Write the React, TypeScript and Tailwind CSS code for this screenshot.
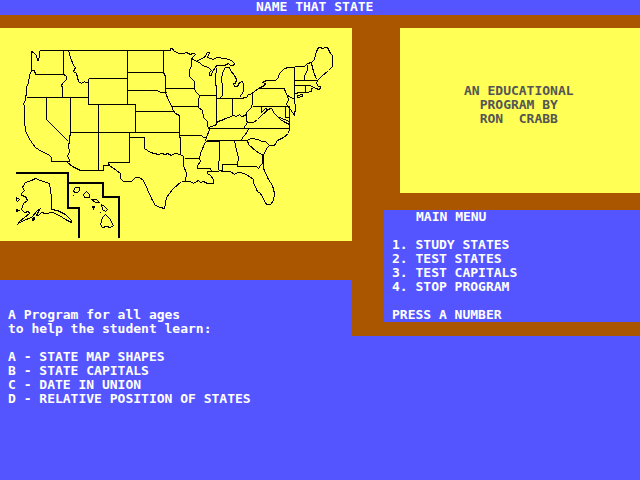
const MAINLAND = [
  // West coast and Pacific states
  'M39 50H170M31 70V51L33 52L36 55L37 60H38L39 56V50M31 70H34L35 74H64M63 50V74L66 76V79L62 83L61 85L62 87V97',
  'M31 70L29 75L28 82L26 87V94L25 96V100L23 103L24 106V120L25 130L28 137L32 143L35 147L41 151L48 154L51 157V161H69',
  'M26 97H88M68 50L70 57L73 65L75 67L73 71L76 73L78 81L81 83L84 81L85 82H88',
  // Mountain states
  'M88 78H127M88 78V104M127 50V104M88 104H135V132M98 104V170M46 97V119L68 141M70 97V135H69V141L68 145L69 152L67 155L69 160L67 162L72 166L80 170H103V165H109L108 163V162H129V132',
  'M70 132H179M129 137H144V148L150 152L158 154L161 153L165 154L167 153L171 155L174 153L181 154',
  // Plains
  'M163 50V72L165 76V92L168 100L171 105L173 111L175 113L179 115V137H180V154L183 156V165L186 173L185 181',
  'M127 72H163M127 90H157L160 92H166M165 88H194M135 111H174M171 106H198M184 158H199M179 135H201L203 137H206',
  // Upper Midwest
  'M170 50V48H172L173 50L178 53H183L186 52L190 54L192 53H194L195 54L192 57L191 59V66L189 69V76L194 81V88L195 91L199 95L198 100V107L202 110L203 117L207 121V126L209 129L206 137L205 141L200 153L199 158L200 161L197 165V168H210L211 171H207V173L210 175L213 179V183H207L203 181L200 182L198 180L193 183L190 181H181',
  'M191 59H193L196 61L201 58L204 57L207 52H209L207 57L210 58L213 59L216 57L225 58L231 60L234 63L233 65H230L228 63L224 65H216L215 67L212 71L211 75L209 75V72L211 70L208 67L202 65L199 62L196 61',
  'M216 67V70L215 75V82L216 88V121M199 95H216M216 98H240L246 97L248 94H250L258 88',
  'M219 98L222 95V87L221 77L223 70L225 67H229L230 70L234 75L236 79L235 83H233L234 86H237L239 82L242 81L243 84V91L239 97',
  // Ohio valley
  'M232 98V115M208 129L210 126L215 125L217 121L221 120L225 118L228 117L233 115L236 116L239 114L241 116L245 115L246 112L251 107L252 103V93M252 106H289M246 112V120L247 122L253 122L257 119L261 115L269 108',
  'M247 122L243 128M208 128H289M206 140H247M248 129L245 134L242 137L241 140M261 106V112L265 108L267 109L271 108L274 113L278 117L280 119L283 121L289 124M279 117L284 119L289 121',
  // Northeast
  'M258 88H284L285 92L287 95L288 100L286 103L287 106L290 109L294 115L295 107L294 99L287 95M258 88L264 85L265 83L262 82L263 81L267 80H275L278 77L279 73L284 68L288 67H294V98',
  'M294 66H304L307 63L311 62L314 59L316 51L318 47H320L322 48L325 47H327L330 53L332 55V66L328 70L321 76L317 80L316 83L318 86H320V88L318 89L316 88L313 87L311 89',
  'M307 64V70L304 75V80M311 63L313 71L316 79M294 80H316M294 85H310L313 87M295 93L299 92H306L311 91V87M305 85V92M297 95L302 94V96L297 97ZM285 106V117H289M289 106V129',
  // South Atlantic and Gulf coasts
  'M289 129L288 133L283 137L277 140L274 145H269L266 148L263 155V168L268 179L272 185L274 193L273 200L270 204H266L260 193L257 191L253 182V179L246 174L240 172L237 172L234 174L230 171H222V164H237V166H256L258 168L260 165L262 163V155',
  'M247 140L250 138L258 139L261 141H265L269 145M247 140L248 144L256 151L263 155M234 140L236 150L238 157L237 164M205 141H219V152L218 170M211 171H217L220 170L222 171',
  // Texas
  'M181 181L172 189L166 197L164 208L160 207L155 205L151 198L143 180L139 177H135L131 181H123L120 178V173L116 170L109 165',
].join('');

const ALASKA = [
  'M35 178L40 180L49 183L51 197V209L57 210L65 214L71 220V222L65 219L59 215L52 212L45 213L41 212L38 215H36L39 209L37 210L31 217L23 220L18 223L19 221L29 213L28 211L24 212L21 209L23 203L27 200L25 196L21 195V193L24 190L22 187L25 182L31 180Z',
  'M16 197L19 199L17 201L16 200ZM16 209L18 210L16 211ZM32 218L34 217V219L32 220Z',
].join('');

const HAWAII = [
  'M75 187H79V190L77 192H74L73 190ZM72 195H73M86 191L89 194V197H84L83 194ZM91 199H96L99 202H95ZM92 206H94L93 208ZM99 212H100M101 204L104 206L107 209L105 211L102 209Z',
  'M105 214L108 217L110 219L111 222L113 225L110 227L106 226L102 227L100 224L102 217Z',
].join('');

function UnitedStatesMap() {
  return (
    <svg
      viewBox="0 0 352 213"
      role="img"
      aria-label="Map of the United States"
      className="block w-full"
      fill="none"
      stroke="#000"
      shapeRendering="crispEdges"
    >
      <g transform="translate(.5 -27.5)">
        <path d={MAINLAND} />
        <path d={ALASKA} />
        <path d={HAWAII} />
      </g>
      <path
        transform="translate(0 -28)"
        strokeWidth="2"
        d="M16 173H68V208H79V238M68 183H103V197H119V238"
      />
    </svg>
  );
}

const topics = [
  'A - STATE MAP SHAPES',
  'B - STATE CAPITALS',
  'C - DATE IN UNION',
  'D - RELATIVE POSITION OF STATES',
];

const choices = ['1. STUDY STATES', '2. TEST STATES', '3. TEST CAPITALS', '4. STOP PROGRAM'];

export default function App() {
  return (
    <div className="min-h-screen bg-[#5555ff] font-['DejaVu_Sans_Mono','Liberation_Mono',monospace] text-[13px] leading-[14px] font-bold whitespace-pre text-white">
      <header className="h-[15px] pl-[40%]">
        <h1>NAME THAT STATE</h1>
      </header>
      <main className="grid grid-cols-[55%_1fr] items-start">
        <div>
          <div className="bg-[#aa5500] pt-[13px] pb-[39px]">
            <div className="bg-[#ffff55]">
              <UnitedStatesMap />
            </div>
          </div>
          <section className="px-2 pt-7">
            <p>{'A Program for all ages\nto help the student learn:'}</p>
            <ul className="pt-3.5">
              {topics.map((topic) => (
                <li key={topic}>{topic}</li>
              ))}
            </ul>
          </section>
        </div>
        <div className="bg-[#aa5500] pt-[13px] pb-3.5">
          <section className="ml-12 h-[165px] bg-[#ffff55] pt-14 pl-16 text-[#555555]">
            <p>{'AN EDUCATIONAL\n  PROGRAM BY\n  RON  CRABB'}</p>
          </section>
          <nav className="mt-[17px] ml-8 bg-[#5555ff] pl-2" aria-labelledby="menu-title">
            <h2 id="menu-title" className="pl-6">
              MAIN MENU
            </h2>
            <ul className="py-3.5">
              {choices.map((choice) => (
                <li key={choice}>
                  <button type="button" className="block cursor-pointer">
                    {choice}
                  </button>
                </li>
              ))}
            </ul>
            <p>PRESS A NUMBER</p>
          </nav>
        </div>
      </main>
    </div>
  );
}
